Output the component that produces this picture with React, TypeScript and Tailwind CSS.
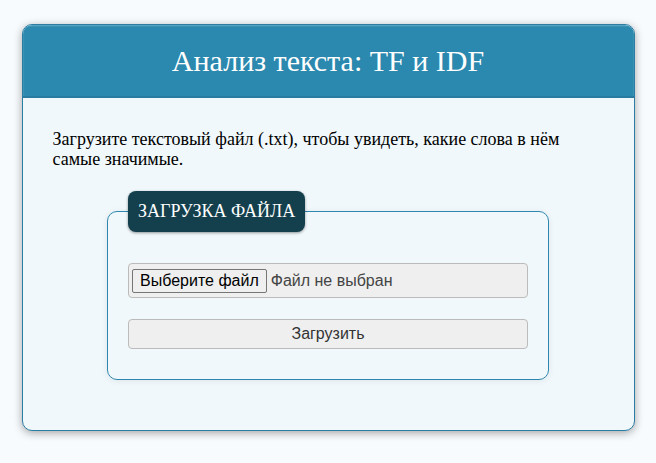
export default function App() {
  return (
    <div className="min-h-screen bg-[#f8fbfd] pt-[24px] pb-8 font-[family-name:'Liberation_Serif',serif]">
      <div className="mx-auto w-[613px] overflow-hidden rounded-[10px] border border-[#2a7ea4] bg-[#f0f8fb] shadow-[0_2px_8px_rgba(0,0,0,0.35)]">
        <header className="flex h-[73px] items-center justify-center border-b-2 border-[#2a7ba0] bg-[#2b88ae] shadow-[inset_0_1px_2px_rgba(255,255,255,0.3)]">
          <h1 className="text-[30px] leading-none text-white">Анализ текста: TF и IDF</h1>
        </header>
        <main className="px-[30px] pt-[31px] pb-[28px]">
          <p className="text-[18px] leading-[20px] text-black">
            Загрузите текстовый файл (.txt), чтобы увидеть, какие слова в нём самые значимые.
          </p>
          <fieldset className="mx-auto mt-[22px] mb-[22px] w-[442px] rounded-[10px] border border-[#2f86ae] px-[20px] pt-[10px] pb-[30px] shadow-[0_1px_6px_rgba(0,0,0,0.08)]">
            <legend className="rounded-[8px] bg-[#143f4d] px-[10px] py-[10px] text-[18px] leading-[21px] uppercase text-white shadow-[0_1px_3px_rgba(0,0,0,0.4)]">
              Загрузка файла
            </legend>
            <div className="flex flex-col gap-[21px] pt-[21px] font-[family-name:'Liberation_Sans',sans-serif] text-[16px]">
              <label className="flex h-[35px] items-center gap-[4px] rounded-[4px] border border-[#bbbbbb] bg-[#efefef] px-[3px]">
                <input type="file" accept=".txt" className="hidden" />
                <span className="rounded-[2px] border border-[#767676] bg-[#efefef] px-[7px] leading-[22px] text-black">
                  Выберите файл
                </span>
                <span className="text-[#444]">Файл не выбран</span>
              </label>
              <button className="h-[30px] rounded-[4px] border border-[#bbbbbb] bg-[#efefef] text-[#333]">
                Загрузить
              </button>
            </div>
          </fieldset>
        </main>
      </div>
    </div>
  );
}
